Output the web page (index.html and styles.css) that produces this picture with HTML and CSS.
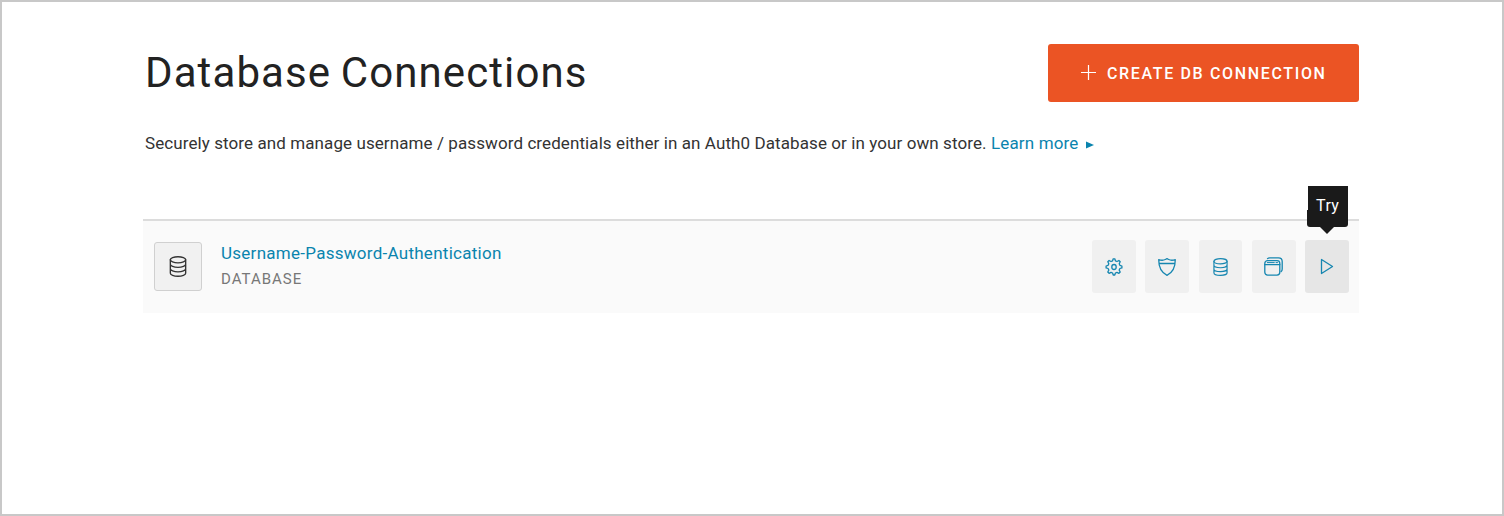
FILE: index.html
```html
<!DOCTYPE html>
<html lang="en">
<head>
<meta charset="utf-8">
<title>Database Connections</title>
<link rel="stylesheet" href="styles.css">
</head>
<body>
<svg class="defs" width="0" height="0" aria-hidden="true">
  <symbol id="database" viewBox="0 0 16 20">
    <ellipse cx="8" cy="3.6" rx="7.3" ry="2.9"/>
    <path d="M.7 3.6v12.8c0 1.6 3.3 2.9 7.3 2.9s7.3-1.3 7.3-2.9V3.6M.7 7.9c0 1.6 3.3 2.9 7.3 2.9s7.3-1.3 7.3-2.9M.7 12.2c0 1.6 3.3 2.9 7.3 2.9s7.3-1.3 7.3-2.9"/>
  </symbol>
</svg>
<main class="page">
  <header class="header">
    <h1 class="title">Database Connections</h1>
    <button class="create">
      <svg class="plus" width="15" height="15" viewBox="0 0 15 15"><path d="M7.5 0v15M0 7.5h15"/></svg>
      <span class="create-label">CREATE DB CONNECTION</span>
    </button>
  </header>
  <p class="intro"><span class="intro-text">Securely store and manage username / password credentials either in an Auth0 Database or in your own store.</span><a class="learn"><span class="learn-text">Learn more</span><svg width="8" height="8" viewBox="0 0 8 8"><path d="M0 .5v7L8 4z" fill="currentColor"/></svg></a></p>
  <section class="connection">
    <div class="badge"><svg class="icon" width="18" height="21"><use href="#database"/></svg></div>
    <div class="info">
      <a class="name">Username-Password-Authentication</a>
      <span class="type">DATABASE</span>
    </div>
    <div class="actions">
      <button class="action first"><svg class="icon" width="18" height="18" viewBox="0 0 18 18"><path d="M7.6 2.8 8.2.8h1.6l.6 2 1.6.7 1.9-1 1.3 1.3-1 1.9.7 1.6 2 .7v1.9l-2 .6-.7 1.6 1 1.9-1.3 1.3-1.9-1-1.6.7-.6 2H8.2l-.6-2-1.6-.7-1.9 1L2.8 14l1-1.9-.7-1.6-2-.6V8l2-.7.7-1.6-1-1.9 1.3-1.3 1.900 1z"/><ellipse cx="9" cy="9" rx="2.2" ry="2.5"/></svg></button>
      <button class="action"><svg class="icon" width="18" height="18" viewBox="0 0 18 18"><path d="M.7 1.6C3 2.4 5.5 2.4 7.3 1.5L9 .7l1.7.8c1.8.9 4.3.9 6.6.1 0 7.5-1.7 12.7-8.3 15.7C2.4 14.3.7 9.1.7 1.6zM1.1 5.5h15.8"/></svg></button>
      <button class="action"><svg class="icon" width="15" height="18"><use href="#database"/></svg></button>
      <button class="action"><svg class="icon" width="19" height="19" viewBox="0 0 19 19"><rect x=".8" y="3.6" width="15" height="14.5" rx="2.8"/><path d="M.8 7.6h15M3.5 1.6c.5-.5 1.3-.8 2.2-.8h8.8c2.3 0 3.7 1.4 3.7 3.7V12c0 1-.3 2-1 2.6"/><path class="detail" d="M3.3 5.6h7M12 5.6h1.5"/></svg></button>
      <button class="action current"><svg class="icon" width="14" height="17" viewBox="0 0 14 17"><path d="M1.5 1.500v14l11-7z"/></svg><span class="tooltip">Try</span></button>
    </div>
  </section>
</main>
</body>
</html>
```
FILE: styles.css
```css
* { box-sizing: border-box; }
body { margin: 0; background: #fff; color: #222; font-family: Roboto, "Liberation Sans", sans-serif; }
button { border: 0; padding: 0; font: inherit; }
.defs { display: block; height: 0; }
.page { height: 516px; border: 2px solid #c8c8c8; padding: 42px 143px 0 141px; }
.header { display: flex; justify-content: space-between; height: 57px; }
.title { margin: 0 0 0 2px; font-size: 42px; line-height: 57px; font-weight: 400; letter-spacing: 1.1px; word-spacing: -2px; white-space: nowrap; }
.create { display: flex; align-items: center; width: 311px; height: 57.5px; padding-left: 33px; background: #eb5424; color: #fff; border-radius: 3px; }
.plus { stroke: #fff; stroke-width: 1.2; margin-right: 11px; }
.create-label { font-size: 16px; letter-spacing: 1.65px; font-weight: 500; white-space: nowrap; padding-top: 1px; }
.intro { display: flex; align-items: center; margin: 30px 0 0 2px; height: 24px; font-size: 17px; color: #333; white-space: nowrap; }
.intro-text { width: 846px; letter-spacing: .09px; }
.learn { display: flex; align-items: center; color: #0a84ae; }
.learn-text { width: 95px; letter-spacing: .15px; }
.learn svg { margin-top: 3px; }
.connection { display: flex; align-items: flex-start; margin-top: 64px; height: 94px; padding: 20px 10px 0 11px; border-top: 2px solid #dcdcdc; background: #fafafa; }
.icon { fill: none; stroke: currentColor; stroke-width: 1.3; stroke-linejoin: round; stroke-linecap: round; }
.detail { stroke-width: 1; }
.badge { display: grid; place-items: center; width: 48px; height: 49px; margin-top: 1px; border: 1px solid #d0d0d0; border-radius: 3px; background: #f1f1f1; color: #333; }
.info { display: flex; flex-direction: column; margin-left: 19px; }
.name { height: 24px; line-height: 24px; font-size: 17px; letter-spacing: .27px; color: #0a84ae; }
.type { height: 24px; line-height: 24px; margin-top: 2px; font-size: 15px; letter-spacing: 1px; color: #777; }
.actions { display: flex; gap: 9.500px; margin: -1px 0 0 auto; }
.action { position: relative; display: grid; place-items: center; width: 43.800px; height: 53px; border-radius: 3px; background: #f0f0f0; color: #1686b0; }
.current { background: #e6e6e6; }
.tooltip { position: absolute; left: 2px; bottom: 66px; width: 41px; height: 41px; line-height: 40px; background: linear-gradient(#1a1a1a, #1a1a1a) 1px 0 / 40px 24px no-repeat, linear-gradient(#1a1a1a, #1a1a1a) 0 24px / 41px 17px no-repeat; color: #fff; border-radius: 0 0 3px 3px; font-size: 16px; letter-spacing: .4px; text-align: center; }
.tooltip::after { content: ""; position: absolute; left: 13px; top: 41px; border: 7px solid transparent; border-top-color: #1a1a1a; border-bottom: 0; }
```
